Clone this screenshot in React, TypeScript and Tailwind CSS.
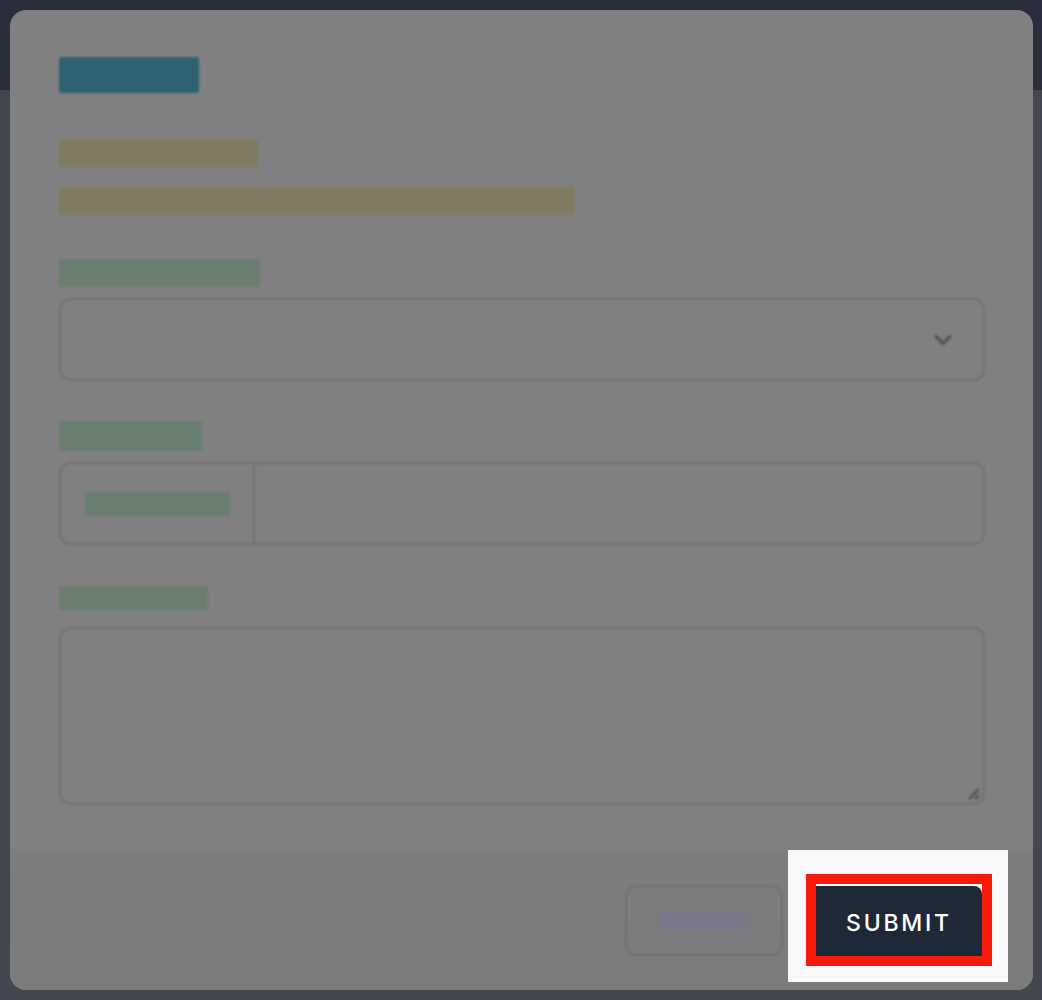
import { ChevronDown } from "lucide-react";

function Bar({ className }: { className: string }) {
  return <div className={`shrink-0 rounded-[2px] ${className}`} />;
}

export default function App() {
  return (
    <div
      className="relative h-[1000px] w-full overflow-hidden bg-[#44464e]"
      style={{ fontFamily: "Inter, 'Liberation Sans', sans-serif" }}
    >
      <div className="h-[90px] bg-[#2a2d3c]" />

      <div className="absolute left-[10px] top-[10px] flex h-[980px] w-[1023px] flex-col rounded-2xl bg-[#808080]">
        <div className="flex flex-1 flex-col px-[49px] pt-[47px] blur-[1px]">
          <Bar className="h-9 w-[140px] bg-[#2e6272]" />
          <Bar className="mt-[46px] h-7 w-[199px] bg-[#7f7a62]" />
          <Bar className="mt-5 h-7 w-[515px] bg-[#7f7a62]" />

          <Bar className="mt-11 h-7 w-[201px] bg-[#6a7e70]" />
          <div className="mt-[11px] flex h-[83px] w-[926px] items-center justify-end rounded-xl border-2 border-[#717171] pr-[26px]">
            <ChevronDown className="h-7 w-7 text-[#555555]" strokeWidth={2.75} />
          </div>

          <Bar className="mt-10 h-[30px] w-[143px] bg-[#6a7e70]" />
          <div className="mt-[11px] flex h-[83px] w-[926px] rounded-xl border-2 border-[#717171]">
            <div className="flex w-[194px] items-center border-r-2 border-[#717171] pl-6">
              <Bar className="h-6 w-[145px] bg-[#6a7e70]" />
            </div>
          </div>

          <Bar className="mt-[41px] h-6 w-[149px] bg-[#6a7e70]" />
          <div className="relative mt-[17px] h-[178px] w-[926px] rounded-xl border-2 border-[#717171]">
            <svg
              className="absolute bottom-[2px] right-[2px]"
              width="16"
              height="16"
              viewBox="0 0 16 16"
              fill="none"
              stroke="#555555"
              strokeWidth="2.5"
            >
              <path d="M14 4 L4 14 M14 10 L10 14" />
            </svg>
          </div>
        </div>

        <footer className="flex h-[140px] items-center justify-end gap-[33px] rounded-b-2xl bg-gradient-to-b from-[#7d7d7d] to-[#7b7b7b] pr-[51px]">
          <div className="flex h-[71px] w-[158px] items-center justify-center rounded-xl border-2 border-[#717171] blur-[1px]">
            <Bar className="h-[21px] w-[90px] bg-[#7a7888]" />
          </div>

          <div className="relative h-[72px] w-[166px]">
            <div className="absolute -bottom-[26px] -left-[28px] -right-[26px] -top-[34px] bg-[#f8f9fb]" />
            <div className="absolute -inset-[10px] bg-[#fa1a0a]" />
            <div className="relative h-full w-full bg-[#f8f9fb] pt-[2px]">
              <button
                type="button"
                className="flex h-[70px] w-full items-center justify-center rounded-tr-lg bg-[#1f2837] pt-1 text-[23px] font-medium tracking-[0.12em] text-white"
              >
                SUBMIT
              </button>
            </div>
          </div>
        </footer>
      </div>
    </div>
  );
}
